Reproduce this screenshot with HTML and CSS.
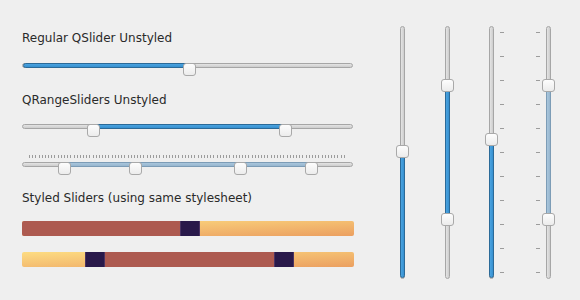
FILE: index.html
```html
<!DOCTYPE html>
<html lang="en">
<head>
    <meta charset="UTF-8">
    <meta name="viewport" content="width=device-width, initial-scale=1.0">
    <title>QRangeSlider Demo</title>
    <link rel="stylesheet" href="styles.css">
</head>
<body>

    <div class="window">
        <div class="left">
            <p class="label first">Regular QSlider Unstyled</p>
            <div class="hslider">
                <div class="groove"><div class="fill" style="left:0;width:167px"></div></div>
                <div class="handle" style="left:161px"></div>
            </div>

            <p class="label">QRangeSliders Unstyled</p>
            <div class="hslider">
                <div class="groove"><div class="fill" style="left:71px;width:192px"></div></div>
                <div class="handle" style="left:65px"></div>
                <div class="handle" style="left:257px"></div>
            </div>

            <div class="ticked">
                <div class="hticks"></div>
                <div class="hslider">
                    <div class="groove"><div class="fill light" style="left:42px;width:247px"></div></div>
                    <div class="handle" style="left:36px"></div>
                    <div class="handle" style="left:107px"></div>
                    <div class="handle" style="left:212px"></div>
                    <div class="handle" style="left:283px"></div>
                </div>
            </div>

            <p class="label styled-label">Styled Sliders (using same stylesheet)</p>
            <div class="styled">
                <div class="styled-fill" style="left:0;width:158px"></div>
                <div class="styled-handle" style="left:158px"></div>
            </div>
            <div class="styled second">
                <div class="styled-fill" style="left:83px;width:170px"></div>
                <div class="styled-handle" style="left:63px"></div>
                <div class="styled-handle" style="left:252px"></div>
            </div>
        </div>

        <div class="right">
            <div class="vslider v1">
                <div class="vgroove"><div class="vfill" style="top:125px;bottom:0"></div></div>
                <div class="vhandle" style="top:119px"></div>
            </div>
            <div class="vslider v2">
                <div class="vgroove"><div class="vfill" style="top:59px;height:134px"></div></div>
                <div class="vhandle" style="top:53px"></div>
                <div class="vhandle" style="top:187px"></div>
            </div>
            <div class="vslider v3">
                <div class="vgroove"><div class="vfill" style="top:113px;bottom:0"></div></div>
                <div class="vhandle" style="top:107px"></div>
            </div>
            <div class="vticks t3"></div>
            <div class="vticks t4"></div>
            <div class="vslider v4">
                <div class="vgroove"><div class="vfill light" style="top:59px;height:134px"></div></div>
                <div class="vhandle" style="top:53px"></div>
                <div class="vhandle" style="top:187px"></div>
            </div>
        </div>
    </div>

</body>
</html>
```

FILE: styles.css
```css
body {
    margin: 0;
    background-color: #efefef;
    font-family: "DejaVu Sans", sans-serif;
    font-size: 12px;
    color: #2a2a2a;
}

.window {
    display: flex;
    width: 580px;
    height: 300px;
}

.left {
    width: 332px;
    padding-left: 22px;
}

.label {
    margin: 16px 0 0 0;
    height: 16px;
    line-height: 16px;
    white-space: nowrap;
}

.label.first {
    margin-top: 30px;
}

.label.styled-label {
    margin-top: 15px;
}

/* horizontal sliders */

.hslider {
    position: relative;
    width: 331px;
    height: 13px;
    margin-top: 16px;
}

.first + .hslider {
    margin-top: 17px;
}

.groove {
    position: relative;
    box-sizing: border-box;
    height: 5px;
    margin-top: 4px;
    border: 1px solid #a6a6a6;
    border-radius: 3px;
    background: linear-gradient(#e4e4e4, #cdcdcd);
}

.fill {
    position: absolute;
    top: -1px;
    bottom: -1px;
    box-sizing: border-box;
    border: 1px solid #2b6a98;
    border-radius: 3px;
    background: linear-gradient(#4aa3e0, #3790cf);
}

.fill.light {
    border-color: #7c9cb6;
    background: linear-gradient(#a9c6dc, #97b6cf);
}

.handle {
    position: absolute;
    top: 0;
    box-sizing: border-box;
    width: 13px;
    height: 13px;
    border: 1px solid #a9a9a9;
    border-radius: 3px;
    background: linear-gradient(#fdfdfd, #ececec);
}

.ticked {
    margin-top: 18px;
}

.hticks {
    height: 3px;
    margin-left: 7px;
    width: 318px;
    background: repeating-linear-gradient(to right, #9c9c9c 0 1px, transparent 1px 3.18px);
}

.ticked .hslider {
    margin-top: 3px;
}

/* styled sliders */

.styled {
    position: relative;
    width: 332px;
    height: 15px;
    margin-top: 15px;
    border-radius: 2px;
    overflow: hidden;
    background: linear-gradient(to bottom right, #fddc82, #eb9f60);
}

.styled.second {
    margin-top: 16px;
}

.styled-fill {
    position: absolute;
    top: 0;
    bottom: 0;
    background-color: #ad5a50;
}

.styled-handle {
    position: absolute;
    top: 0;
    bottom: 0;
    width: 20px;
    box-sizing: border-box;
    border-left: 1px solid #4a3362;
    border-right: 1px solid #4a3362;
    background-color: #29194a;
}

/* vertical sliders */

.right {
    display: flex;
    align-items: flex-start;
    padding-top: 26px;
}

.vslider {
    position: relative;
    width: 13px;
    height: 253px;
}

.v1 { margin-left: 42px; }
.v2 { margin-left: 32px; }
.v3 { margin-left: 31px; }
.v4 { margin-left: 2px; }

.vgroove {
    position: relative;
    box-sizing: border-box;
    width: 5px;
    height: 253px;
    margin-left: 4px;
    border: 1px solid #a6a6a6;
    border-radius: 3px;
    background: linear-gradient(to right, #e4e4e4, #cdcdcd);
}

.vfill {
    position: absolute;
    left: -1px;
    right: -1px;
    box-sizing: border-box;
    border: 1px solid #2b6a98;
    border-radius: 3px;
    background: linear-gradient(to right, #4aa3e0, #3790cf);
}

.vfill.light {
    border-color: #7c9cb6;
    background: linear-gradient(to right, #a9c6dc, #97b6cf);
}

.vhandle {
    position: absolute;
    left: 0;
    box-sizing: border-box;
    width: 13px;
    height: 13px;
    border: 1px solid #a9a9a9;
    border-radius: 3px;
    background: linear-gradient(#fdfdfd, #ececec);
}

.vticks {
    width: 4px;
    height: 241px;
    margin-top: 6px;
    background: repeating-linear-gradient(to bottom, #9c9c9c 0 1px, transparent 1px 24px);
}

.t3 { margin-left: 2px; }
.t4 { margin-left: 32px; }
```
